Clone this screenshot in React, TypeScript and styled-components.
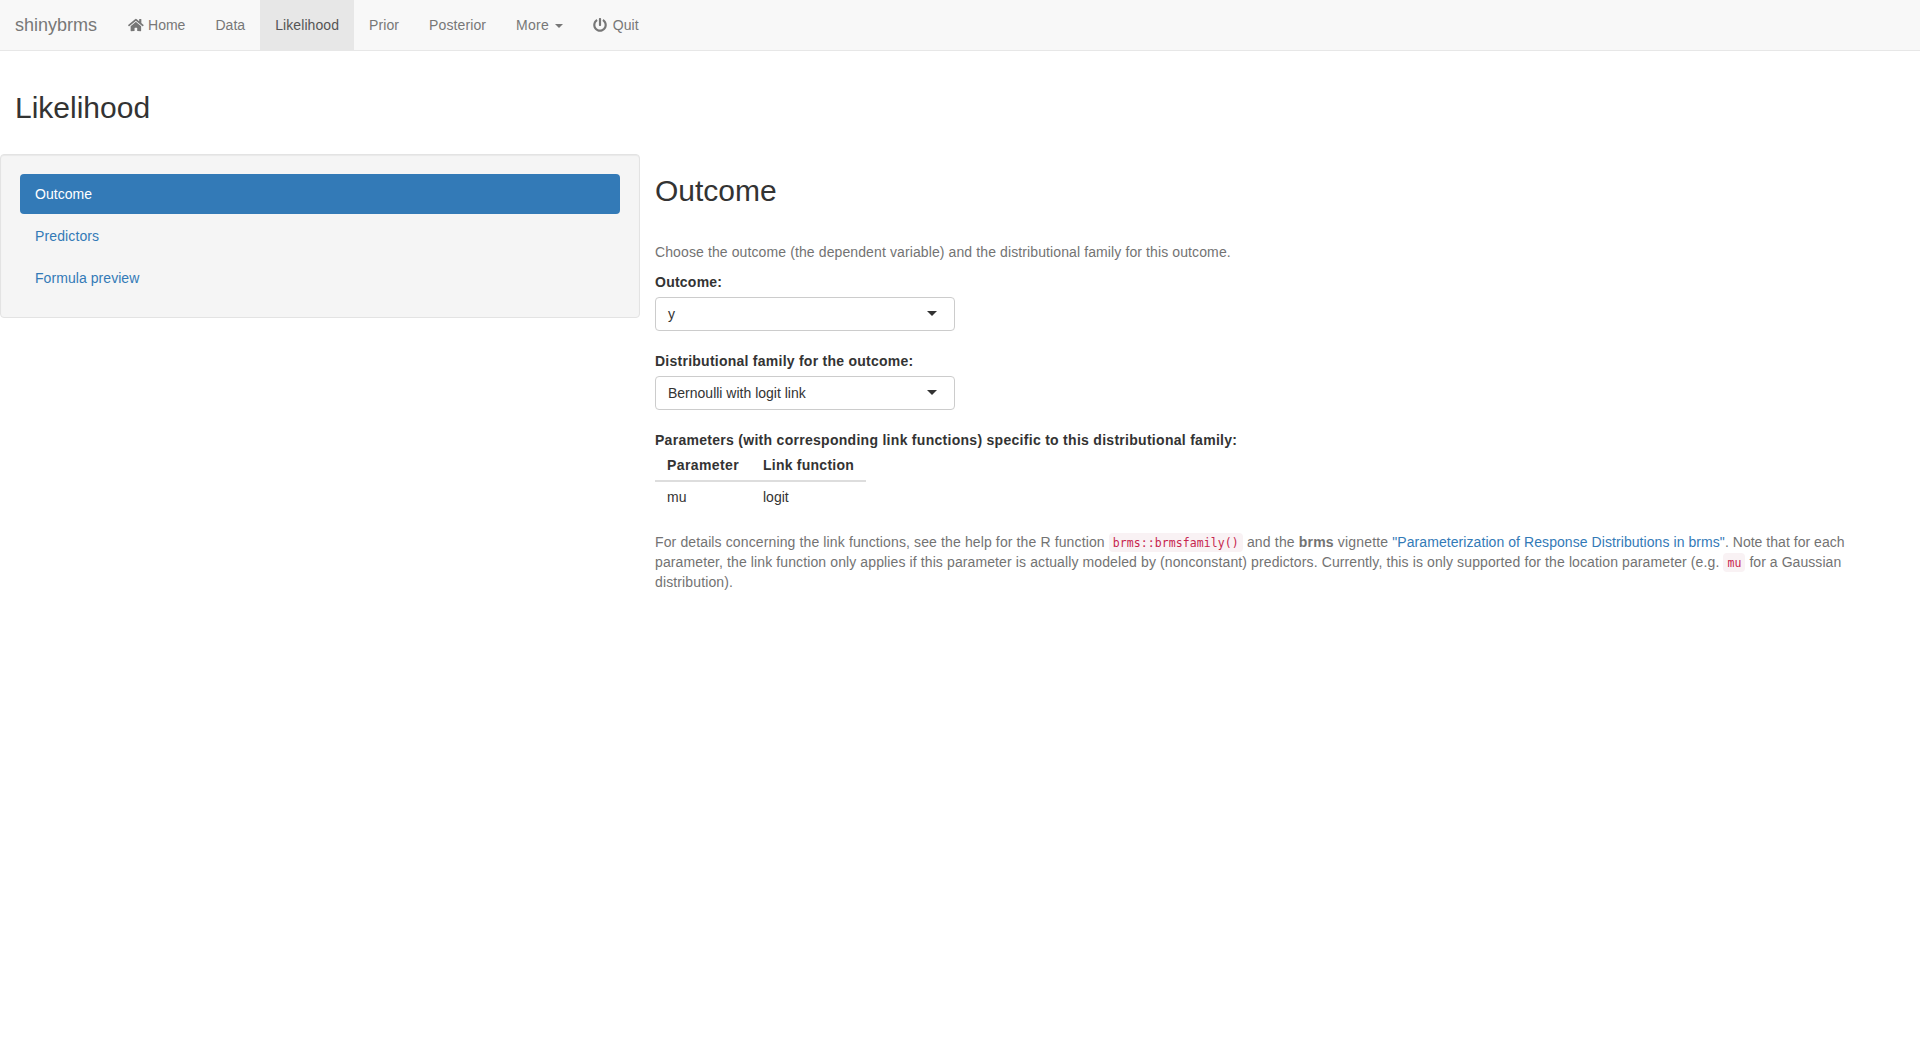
import React from "react";
import styled, { createGlobalStyle, css } from "styled-components";
import { FaHome, FaPowerOff } from "react-icons/fa";

const GlobalStyle = createGlobalStyle`
  *, *::before, *::after { box-sizing: border-box; }
  body {
    margin: 0;
    background: #fff;
    color: #333;
    font-family: "Liberation Sans", Arial, Helvetica, sans-serif;
    font-size: 14px;
    line-height: 20px;
  }
`;

interface Tracked {
  $tracking?: number;
}

const tracking = css<Tracked>`
  letter-spacing: ${(p) => p.$tracking ?? 0}px;
`;

const Navbar = styled.nav`
  display: flex;
  height: 51px;
  margin-bottom: 20px;
  background: #f8f8f8;
  border-bottom: 1px solid #e7e7e7;
`;

const Brand = styled.a`
  padding: 15px 15.8px 15px 15px;
  font-size: 18px;
  color: #777;
`;

const NavList = styled.ul`
  display: flex;
  margin: 0;
  padding: 0;
  list-style: none;
`;

const NavLink = styled.a<Tracked & { $active?: boolean }>`
  ${tracking}
  display: block;
  height: 50px;
  padding: 15px;
  white-space: pre;
  color: ${(p) => (p.$active ? "#555" : "#777")};
  background: ${(p) => (p.$active ? "#e7e7e7" : "transparent")};
`;

const HomeIcon = styled(FaHome)`
  width: 15.75px;
  height: 14px;
  margin-right: 0.6px;
  vertical-align: -1.75px;
`;

const PowerIcon = styled(FaPowerOff)`
  width: 14px;
  height: 14px;
  margin-right: 1.8px;
  vertical-align: -1.75px;
`;

const caret = css`
  display: inline-block;
  width: 0;
  height: 0;
  border-style: solid;
  border-color: currentColor transparent transparent;
`;

const MenuCaret = styled.b`
  ${caret}
  margin-left: 2px;
  vertical-align: middle;
  border-width: 4px 4px 0;
`;

const Title = styled.h2`
  margin: 20px 0 30px;
  font-size: 30px;
  font-weight: 500;
  line-height: 33px;
`;

const PageHeader = styled.header`
  display: flow-root;
  padding: 0 15px;
`;

const Columns = styled.div`
  display: grid;
  grid-template-columns: 640px 1fr;
  align-items: start;
`;

const Well = styled.aside`
  display: flex;
  flex-direction: column;
  gap: 2px;
  padding: 19px;
  background: #f5f5f5;
  border: 1px solid #e3e3e3;
  border-radius: 4px;
  box-shadow: inset 0 1px 1px rgba(0, 0, 0, 0.05);
`;

const Pill = styled.a<Tracked & { $active?: boolean }>`
  ${tracking}
  padding: 10px 15px;
  border-radius: 4px;
  color: ${(p) => (p.$active ? "#fff" : "#337ab7")};
  background: ${(p) => (p.$active ? "#337ab7" : "transparent")};
`;

const Main = styled.main`
  display: flow-root;
  padding: 0 15px;
`;

const Help = styled.p`
  margin: 5px 0 10px;
  letter-spacing: 0.125px;
  color: #737373;
`;

const Intro = styled(Help)`
  margin-top: 35px;
  letter-spacing: 0.11px;
`;

const Field = styled.div`
  width: 300px;
  margin-bottom: 20px;
`;

const Label = styled.div<Tracked>`
  ${tracking}
  font-weight: 700;
  white-space: nowrap;
`;

const Select = styled.div`
  display: flex;
  align-items: center;
  justify-content: space-between;
  height: 34px;
  margin-top: 5px;
  padding: 0 17px 0 12px;
  background: #fff;
  border: 1px solid #ccc;
  border-radius: 4px;
`;

const SelectCaret = styled.span`
  ${caret}
  border-width: 5px 5px 0;
  margin-bottom: 1px;
`;

const Table = styled.table`
  margin-bottom: 20px;
  border-collapse: collapse;
`;

const HeadCell = styled.th<Tracked>`
  ${tracking}
  padding: 5px 12px;
  text-align: left;
  border-bottom: 2px solid #ddd;
`;

const Cell = styled.td`
  padding: 5px 12px;
`;

const Run = styled.span<Tracked>`
  ${tracking}
`;

const Link = styled.a`
  letter-spacing: 0.07px;
  color: #337ab7;
`;

const Code = styled.code`
  padding: 3px 4px 2px;
  font-family: "DejaVu Sans Mono", monospace;
  font-size: 11.5px;
  line-height: 1;
  letter-spacing: 0.08px;
  color: #c7254e;
  background: #f9f2f4;
  border-radius: 4px;
`;

interface SelectFieldProps {
  label: string;
  value: string;
  labelTracking: number;
}

const SelectField = ({ label, value, labelTracking }: SelectFieldProps) => (
  <Field>
    <Label $tracking={labelTracking}>{label}</Label>
    <Select>
      <span>{value}</span>
      <SelectCaret />
    </Select>
  </Field>
);

export default function App() {
  return (
    <>
      <GlobalStyle />
      <Navbar>
        <Brand>shinybrms</Brand>
        <NavList>
          <li><NavLink><HomeIcon /> Home</NavLink></li>
          <li><NavLink $tracking={0.05}>Data</NavLink></li>
          <li><NavLink $active $tracking={0.08}>Likelihood</NavLink></li>
          <li><NavLink $tracking={0.1}>Prior</NavLink></li>
          <li><NavLink $tracking={0.1}>Posterior</NavLink></li>
          <li><NavLink $tracking={0.25}>More <MenuCaret /></NavLink></li>
          <li><NavLink $tracking={0.05}><PowerIcon /> Quit</NavLink></li>
        </NavList>
      </Navbar>
      <PageHeader>
        <Title>Likelihood</Title>
      </PageHeader>
      <Columns>
        <Well>
          <Pill $active $tracking={0.05}>Outcome</Pill>
          <Pill $tracking={0.12}>Predictors</Pill>
          <Pill $tracking={0.06}>Formula preview</Pill>
        </Well>
        <Main>
          <Title>Outcome</Title>
          <Intro>
            Choose the outcome (the dependent variable) and the distributional family for this outcome.
          </Intro>
          <SelectField label="Outcome:" value="y" labelTracking={0.24} />
          <SelectField
            label="Distributional family for the outcome:"
            value="Bernoulli with logit link"
            labelTracking={0.25}
          />
          <Label $tracking={0.285}>
            Parameters (with corresponding link functions) specific to this distributional family:
          </Label>
          <Table>
            <thead>
              <tr>
                <HeadCell $tracking={0.39}>Parameter</HeadCell>
                <HeadCell $tracking={0.24}>Link function</HeadCell>
              </tr>
            </thead>
            <tbody>
              <tr>
                <Cell>mu</Cell>
                <Cell>logit</Cell>
              </tr>
            </tbody>
          </Table>
          <Help>
            For details concerning the link functions, see the help for the R function{" "}
            <Code>brms::brmsfamily()</Code>
            <Run $tracking={0.17}> and the <b>brms</b> vignette </Run>
            <Link>"Parameterization of Response Distributions in brms"</Link>
            <Run $tracking={0.03}>. Note that for each </Run>
            <Run $tracking={0.112}>
              parameter, the link function only applies if this parameter is actually modeled by
              (nonconstant) predictors. Currently, this is only supported for the location parameter
              (e.g.{" "}
            </Run>
            <Code>mu</Code>
            <Run $tracking={0.06}> for a Gaussian </Run>
            distribution).
          </Help>
        </Main>
      </Columns>
    </>
  );
}
